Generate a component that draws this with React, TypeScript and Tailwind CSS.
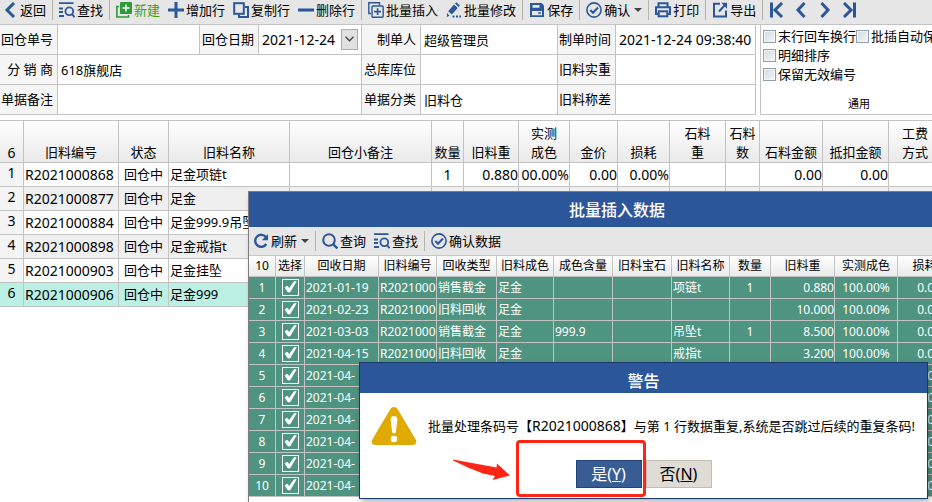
import type { ReactNode } from 'react'
import clsx from 'clsx'

const BLUE = '#2b579a'

type IconName =
  | 'back'
  | 'find'
  | 'new'
  | 'plus'
  | 'copy'
  | 'minus'
  | 'insert'
  | 'edit'
  | 'save'
  | 'confirm'
  | 'print'
  | 'export'
  | 'first'
  | 'prev'
  | 'next'
  | 'last'
  | 'refresh'
  | 'query'

const iconShapes: Record<IconName, ReactNode> = {
  back: <path d="M12 1 5 8l7 7" strokeWidth="3" />,
  find: (
    <>
      <path d="M0 1.2h14.5M0 6.5h4M0 10h4M0 14h5" strokeWidth="1.8" />
      <circle cx="10.3" cy="9.3" r="3.9" strokeWidth="1.8" />
      <path d="m13 12.2 2.6 3" strokeWidth="2" />
    </>
  ),
  new: (
    <>
      <path d="M3 4.5H.9V15h11.6v-2" stroke="#2f9a3a" strokeWidth="1.6" />
      <rect x="4" y="0" width="12" height="12" rx="1" fill="#2f9a3a" stroke="none" />
      <path d="M10 2.5v7M6.5 6h7" stroke="#fff" strokeWidth="1.4" />
    </>
  ),
  plus: <path d="M8 0v16M0 8h16" strokeWidth="3" />,
  copy: (
    <>
      <rect x="1.2" y="1.2" width="9.6" height="10.6" strokeWidth="2" />
      <path d="M12 5h3v10H6v-2.5" strokeWidth="2" />
    </>
  ),
  minus: <path d="M0 8h16" strokeWidth="3" />,
  insert: (
    <>
      <path d="M3 11.5H.8V.8h10.7V3" strokeWidth="1.4" />
      <rect x="4" y="4" width="11.2" height="11.2" rx="1" strokeWidth="1.4" />
      <path d="M9.6 6.2v6.8M6.2 9.6H13" strokeWidth="1.6" />
    </>
  ),
  edit: (
    <>
      <path d="m1 11 2.5 2.8L.8 15zM2.200 9.300 8 2.600l3.700 3.300-5.900 6.500zM9 1.600 10.500.2l3.400 3.200-1.300 1.500z" fill={BLUE} stroke="none" />
      <path d="M6.5 14.5h2M10 14.5h2M13.3 14.5h1.7" strokeWidth="1.8" />
    </>
  ),
  save: (
    <>
      <path d="M1 1h11.5L15 3.5V15H1z" fill={BLUE} stroke="none" />
      <path d="M3.5 3h7v2.7h-7zM3 9h10v4.3H3z" fill="#e6e6e6" stroke="none" />
      <path d="M9 11h3" strokeWidth="1.4" />
    </>
  ),
  confirm: (
    <>
      <circle cx="8" cy="8" r="7.1" strokeWidth="1.6" />
      <path d="m4.3 8 2.7 2.8 5-5.3" strokeWidth="2" />
    </>
  ),
  print: (
    <>
      <path d="M3.5 5V1.2h9V5M3.5 12H1V5.2h14V12h-2.5" strokeWidth="2" />
      <rect x="3.7" y="9.3" width="8.6" height="5" strokeWidth="2" />
    </>
  ),
  export: (
    <>
      <path d="M8 1.8H2v12.6h12V8.5" strokeWidth="2" />
      <path d="m7 9.5 5.5-6" strokeWidth="2" />
      <path d="M9.3.8H15v6z" fill={BLUE} stroke="none" />
    </>
  ),
  first: <path d="M2.5.5v15M13 1 6 8l7 7" strokeWidth="3" />,
  prev: <path d="M11.5 1 5 8l6.5 7" strokeWidth="3" />,
  next: <path d="M4.5 1 11 8l-6.5 7" strokeWidth="3" />,
  last: <path d="M13.5.5v15M3 1l7 7-7 7" strokeWidth="3" />,
  refresh: (
    <>
      <path d="M13 4.2A6 6 0 1 0 13.3 11" strokeWidth="2.4" />
      <path d="M15 1v6.2H8.8z" fill={BLUE} stroke="none" />
    </>
  ),
  query: (
    <>
      <circle cx="7" cy="7" r="5.8" strokeWidth="2" />
      <path d="m11.3 11.3 4.2 4.2" strokeWidth="2.4" />
    </>
  ),
}

function Icon({ name }: { name: IconName }) {
  return (
    <svg viewBox="0 0 16 16" className="size-4 shrink-0" fill="none" stroke={BLUE} aria-hidden="true">
      {iconShapes[name]}
    </svg>
  )
}

interface Tool {
  icon: IconName
  text?: string
  title?: string
  menu?: boolean
}

const mainTools: Tool[][] = [
  [{ icon: 'back', text: '返回' }],
  [{ icon: 'find', text: '查找' }],
  [
    { icon: 'new', text: '新建' },
    { icon: 'plus', text: '增加行' },
    { icon: 'copy', text: '复制行' },
    { icon: 'minus', text: '删除行' },
  ],
  [
    { icon: 'insert', text: '批量插入' },
    { icon: 'edit', text: '批量修改' },
  ],
  [{ icon: 'save', text: '保存' }],
  [{ icon: 'confirm', text: '确认', menu: true }],
  [{ icon: 'print', text: '打印' }],
  [{ icon: 'export', text: '导出' }],
  [
    { icon: 'first', title: '首张' },
    { icon: 'prev', title: '上一张' },
    { icon: 'next', title: '下一张' },
    { icon: 'last', title: '末张' },
  ],
]

const insertTools: Tool[][] = [
  [{ icon: 'refresh', text: '刷新', menu: true }],
  [
    { icon: 'query', text: '查询' },
    { icon: 'find', text: '查找' },
  ],
  [{ icon: 'confirm', text: '确认数据' }],
]

function Toolbar({ groups }: { groups: Tool[][] }) {
  return (
    <div className="flex">
      {groups.map((group, i) => (
        <div
          key={i}
          className={clsx('flex shrink-0 gap-2 pr-1.5', i > 0 && 'border-l border-[#b4b4a8] pl-1.5')}
        >
          {group.map((tool) => (
            <button
              key={tool.icon}
              type="button"
              aria-label={tool.title}
              className={clsx(
                'flex h-5 items-center gap-0.5 whitespace-nowrap',
                tool.icon === 'new' && 'text-[#3ba50c]',
              )}
            >
              <Icon name={tool.icon} />
              {tool.text}
              {tool.menu && (
                <svg viewBox="0 0 8 4" className="ml-0.5 h-1 w-2" aria-hidden="true">
                  <path d="M0 0h8L4 4z" fill="#444" />
                </svg>
              )}
            </button>
          ))}
        </div>
      ))}
    </div>
  )
}

interface FieldProps {
  id: string
  label: string
  value?: string
  numeric?: boolean
  dropdown?: boolean
  wide?: boolean
}

const fields: FieldProps[] = [
  { id: 'no', label: '回仓单号' },
  { id: 'date', label: '回仓日期', value: '2021-12-24', numeric: true, dropdown: true },
  { id: 'maker', label: '制单人', value: '超级管理员' },
  { id: 'time', label: '制单时间', value: '2021-12-24 09:38:40', numeric: true },
  { id: 'dealer', label: '分 销 商', value: '618旗舰店', wide: true },
  { id: 'location', label: '总库库位' },
  { id: 'weight', label: '旧料实重' },
  { id: 'remark', label: '单据备注', wide: true },
  { id: 'category', label: '单据分类', value: '旧料仓' },
  { id: 'diff', label: '旧料称差' },
]

function Field({ id, label, value = '', numeric, dropdown, wide }: FieldProps) {
  return (
    <>
      <label
        htmlFor={id}
        className="flex items-center justify-end border-r border-b border-[#c3c3c3] bg-[#f5f5f5] pr-1 pb-px whitespace-nowrap"
      >
        {label}
      </label>
      <div
        className={clsx(
          'flex items-center border-r border-b border-[#c3c3c3] pb-px pl-[3px]',
          wide && 'col-span-3',
          dropdown && 'pr-[3px]',
        )}
      >
        <input
          id={id}
          defaultValue={value}
          className={clsx('h-6 w-full min-w-0 outline-none', numeric && 'text-[14px]')}
        />
        {dropdown && (
          <button
            type="button"
            aria-label="选择日期"
            className="flex h-[21px] w-[17px] shrink-0 items-center justify-center border border-[#adadad] bg-[#e1e1e1]"
          >
            <svg viewBox="0 0 9 6" className="h-1.5 w-[9px]" fill="none" stroke="#444" strokeWidth="1.3">
              <path d="m.5.8 4 4 4-4" />
            </svg>
          </button>
        )}
      </div>
    </>
  )
}

function Option({ label }: { label: string }) {
  return (
    <label className="flex items-center gap-0.5 whitespace-nowrap">
      <input
        type="checkbox"
        className="size-[13px] shrink-0 appearance-none border border-[#8e9fae] bg-linear-to-br from-[#cfd8e2] to-[#f6f8fa] shadow-[inset_0_0_0_1px_#f4f4f4]"
      />
      {label}
    </label>
  )
}

type Align = 'left' | 'center' | 'right'

interface Column {
  title: string[]
  width: string
  align?: Align
  numeric?: boolean
}

const mainColumns: Column[] = [
  { title: ['旧料编号'], width: 'w-[95px]', numeric: true },
  { title: ['状态'], width: 'w-[50px]', align: 'center' },
  { title: ['旧料名称'], width: 'w-[121px]' },
  { title: ['回仓小备注'], width: 'w-[142px]' },
  { title: ['数量'], width: 'w-8', align: 'center', numeric: true },
  { title: ['旧料重'], width: 'w-[55px]', align: 'right', numeric: true },
  { title: ['实测', '成色'], width: 'w-[51px]', align: 'right', numeric: true },
  { title: ['金价'], width: 'w-12', align: 'right', numeric: true },
  { title: ['损耗'], width: 'w-[52px]', align: 'right', numeric: true },
  { title: ['石料', '重'], width: 'w-14', align: 'right', numeric: true },
  { title: ['石料', '数'], width: 'w-[34px]', align: 'right', numeric: true },
  { title: ['石料金额'], width: 'w-[63px]', align: 'right', numeric: true },
  { title: ['抵扣金额'], width: 'w-[66px]', align: 'right', numeric: true },
  { title: ['工费', '方式'], width: 'w-[53px]' },
]

const mainRows: string[][] = [
  ['R2021000868', '回仓中', '足金项链t', '', '1', '0.880', '00.00%', '0.00', '0.00%', '', '', '0.00', '0.00', ''],
  ['R2021000877', '回仓中', '足金'],
  ['R2021000884', '回仓中', '足金999.9吊坠t'],
  ['R2021000898', '回仓中', '足金戒指t'],
  ['R2021000903', '回仓中', '足金挂坠'],
  ['R2021000906', '回仓中', '足金999'],
]

const alignClass: Record<Align, string> = {
  left: 'text-left pl-px',
  center: 'text-center',
  right: 'text-right',
}

function MainTable() {
  return (
    <table className="w-[942px] min-w-full table-fixed border-separate border-spacing-0 border-t border-[#c3c3c3]">
      <thead>
        <tr className="h-[42px] bg-linear-to-b from-white to-[#e9e9e9] align-bottom">
          <th className="w-6 border-r border-b border-[#c3c3c3] text-[14px] leading-[19px] font-normal">6</th>
          {mainColumns.map((col) => (
            <th
              key={col.title.join('')}
              className={clsx('border-r border-b border-[#c3c3c3] leading-[19px] font-normal whitespace-nowrap', col.width)}
            >
              {col.title.map((line) => (
                <span key={line} className="block">
                  {line}
                </span>
              ))}
            </th>
          ))}
        </tr>
      </thead>
      <tbody>
        {mainRows.map((row, i) => (
          <tr
            key={row[0]}
            className={clsx('h-6', i === 5 ? 'bg-[#bcf0e4]' : i % 2 ? 'bg-[#efefef]' : 'bg-white')}
          >
            <td
              className={clsx(
                'border-r border-b border-[#c3c3c3] pb-[3px] text-center text-[14px] leading-5',
                i < 5 && 'bg-[#f4f4f4]',
              )}
            >
              {i + 1}
            </td>
            {mainColumns.map((col, j) => (
              <td
                key={j}
                className={clsx(
                  'overflow-hidden border-r border-b border-[#c3c3c3] leading-[23px] whitespace-nowrap',
                  alignClass[col.align ?? 'left'],
                  col.numeric && 'text-[14px]',
                )}
              >
                {row[j]}
              </td>
            ))}
          </tr>
        ))}
      </tbody>
    </table>
  )
}

const insertColumns: Column[] = [
  { title: ['回收日期'], width: 'w-[74px]' },
  { title: ['旧料编号'], width: 'w-[58px]' },
  { title: ['回收类型'], width: 'w-[60px]' },
  { title: ['旧料成色'], width: 'w-[57px]' },
  { title: ['成色含量'], width: 'w-[59px]' },
  { title: ['旧料宝石'], width: 'w-[59px]' },
  { title: ['旧料名称'], width: 'w-[58px]' },
  { title: ['数量'], width: 'w-[41px]', align: 'center' },
  { title: ['旧料重'], width: 'w-16', align: 'right' },
  { title: ['实测成色'], width: 'w-[63px]', align: 'center' },
  { title: ['损耗'], width: 'w-[54px]', align: 'right' },
]

const insertRows: string[][] = [
  ['2021-01-19', 'R2021000', '销售截金', '足金', '', '', '项链t', '1', '0.880', '100.00%', '0.00%'],
  ['2021-02-23', 'R2021000', '旧料回收', '足金', '', '', '', '', '10.000', '100.00%', '0.00%'],
  ['2021-03-03', 'R2021000', '销售截金', '足金', '999.9', '', '吊坠t', '1', '8.500', '100.00%', '0.00%'],
  ['2021-04-15', 'R2021000', '旧料回收', '足金', '', '', '戒指t', '', '3.200', '100.00%', '0.00%'],
  ...Array.from({ length: 6 }, () => ['2021-04-', '', '', '', '', '', '', '', '', '', '0.00%']),
]

function RowCheck({ row }: { row: number }) {
  return (
    <span className="mx-auto grid size-[17px]">
      <input
        type="checkbox"
        defaultChecked
        aria-label={`选择第${row}行`}
        className="col-start-1 row-start-1 size-[17px] appearance-none border border-white"
      />
      <svg viewBox="0 0 17 17" className="pointer-events-none col-start-1 row-start-1 size-[17px]">
        <path d="M3 8.600 5.200 7l2 2.600L12.200 2.500h2L8 13H6z" fill="#fff" stroke="#fff" strokeWidth=".7" />
      </svg>
    </span>
  )
}

function InsertTable() {
  return (
    <table className="w-full table-fixed border-separate border-spacing-0 text-[12px]">
      <thead>
        <tr className="h-[21px] bg-linear-to-b from-white to-[#e9e9e9]">
          <th className="w-[27px] border-r border-b border-[#c3c3c3] leading-5 font-normal">10</th>
          <th className="w-[29px] border-r border-b border-[#c3c3c3] leading-5 font-normal">选择</th>
          {insertColumns.map((col) => (
            <th
              key={col.title[0]}
              className={clsx('border-r border-b border-[#c3c3c3] leading-5 font-normal whitespace-nowrap', col.width)}
            >
              {col.title[0]}
            </th>
          ))}
          <th className="border-b border-[#c3c3c3]" />
        </tr>
      </thead>
      <tbody>
        {insertRows.map((row, i) => (
          <tr key={i} className="h-[22px] bg-[#4f9480] text-white">
            <td className="border-r border-b border-[#c3c3c3] text-center leading-[21px]">{i + 1}</td>
            <td className="border-r border-b border-[#c3c3c3]">
              <RowCheck row={i + 1} />
            </td>
            {insertColumns.map((col, j) => (
              <td
                key={j}
                className={clsx(
                  'overflow-hidden border-r border-b border-[#c3c3c3] leading-[21px] whitespace-nowrap',
                  alignClass[col.align ?? 'left'],
                )}
              >
                {row[j]}
              </td>
            ))}
            <td className="border-b border-[#c3c3c3]" />
          </tr>
        ))}
      </tbody>
    </table>
  )
}

function InsertWindow() {
  return (
    <section className="absolute top-[191px] left-[248px] w-[738px] border border-[#7d7d7d] bg-white pb-10 shadow-md">
      <h2 className="bg-[#2b579a] pt-0.5 text-center text-[16px] leading-[33px] font-medium text-white">批量插入数据</h2>
      <div className="border-b border-[#c8c8c8] bg-[#e6e6e6] py-1 pl-1">
        <Toolbar groups={insertTools} />
      </div>
      <InsertTable />
    </section>
  )
}

function WarningDialog() {
  return (
    <section
      role="alertdialog"
      aria-labelledby="warning-title"
      className="absolute top-[362px] left-[359px] w-[569px] border border-[#17396f] bg-white pb-2.5 shadow-[2px_3px_6px_rgba(0,0,0,0.3)]"
    >
      <h2 id="warning-title" className="bg-[#2b579a] pt-1.5 text-center text-[16px] leading-6 font-medium text-white">
        警告
      </h2>
      <div className="flex items-center gap-[11px] px-[11px] pt-[13px]">
        <svg viewBox="0 0 46 40" className="h-10 w-[46px] shrink-0" aria-hidden="true">
          <path
            d="M19.3 3.2c1.7-3 5.7-3 7.4 0l18 30.3c1.7 3-.2 5.5-3.4 5.5H4.7c-3.200 0-5.100-2.500-3.400-5.500z"
            fill="#dfab01"
          />
          <path d="M19.600 13.300c0-4.500 6.800-4.500 6.800 0l-1.400 12c-.3 3-3.700 3-4 0z" fill="#fff" />
          <circle cx="23" cy="33" r="3.200" fill="#fff" />
        </svg>
        <p className="whitespace-nowrap">
          批量处理条码号【<span className="text-[14px]">R2021000868</span>】与第 1 行数据重复,系统是否跳过后续的重复条码!
        </p>
      </div>
      <div className="mt-3.5 flex justify-center gap-1 text-[16px]">
        <button type="button" className="h-7 w-[66px] border border-[#22437a] bg-[#385d95] text-white">
          是(<u>Y</u>)
        </button>
        <button type="button" className="h-7 w-[66px] border border-[#c0bdb4] bg-[#dedcd4]">
          否(<u>N</u>)
        </button>
      </div>

      {/* callout around the confirm button */}
      <div className="pointer-events-none absolute top-[77px] left-[156px] h-[57px] w-[130px] rounded-sm border-3 border-[#fd2515]" />
      <svg viewBox="0 0 58 22" className="pointer-events-none absolute top-[96px] left-[93px] h-[22px] w-[58px]">
        <path d="M0 .5 43.500 8.500 44 4.500 57 16.500 39.500 21 42 17 30 14.500Q15 9 0 1.500z" fill="#fd2515" />
      </svg>
    </section>
  )
}

export default function App() {
  return (
    <main className="relative h-screen overflow-hidden bg-white font-['Noto_Sans','Noto_Sans_CJK_SC',sans-serif] text-[13px] leading-5 text-black">
      <header className="border-b border-[#c3c3c3] bg-[#e6e6e6] pb-1 pl-0.5">
        <Toolbar groups={mainTools} />
      </header>

      <div className="flex gap-1">
        <form className="grid min-w-0 flex-1 auto-rows-[30px] grid-cols-[58px_142px_59px_103px_59px_137px_58px_1fr]">
          {fields.map((field) => (
            <Field key={field.id} {...field} />
          ))}
        </form>
        <fieldset className="w-[172px] min-w-0 shrink-0 overflow-hidden border-b border-l border-[#c3c3c3] pt-0.5 pl-0.5">
          <div className="flex w-48 flex-col leading-[19px]">
            <div className="flex">
              <Option label="末行回车换行" />
              <Option label="批插自动保存" />
            </div>
            <Option label="明细排序" />
            <Option label="保留无效编号" />
            <span className="mt-2.5 text-center text-[11px]">通用</span>
          </div>
        </fieldset>
      </div>

      <div className="mt-[5px] overflow-hidden">
        <MainTable />
      </div>

      <InsertWindow />
      <WarningDialog />
    </main>
  )
}
